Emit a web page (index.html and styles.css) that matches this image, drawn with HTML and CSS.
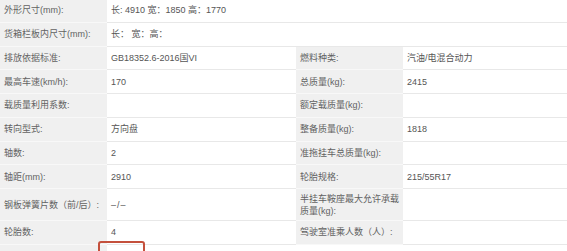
FILE: index.html
```html
<!DOCTYPE html>
<html lang="zh-CN">
<head>
<meta charset="utf-8">
<link rel="stylesheet" href="styles.css">
</head>
<body>
<div class="spec">
  <div class="lab">外形尺寸(mm):</div><div class="val span3">长: 4910 宽：1850 高：1770</div>
  <div class="lab">货箱栏板内尺寸(mm):</div><div class="val span3">长： 宽：高：</div>
  <div class="lab">排放依据标准:</div><div class="val">GB18352.6-2016国VI</div><div class="lab">燃料种类:</div><div class="val">汽油/电混合动力</div>
  <div class="lab">最高车速(km/h):</div><div class="val">170</div><div class="lab">总质量(kg):</div><div class="val">2415</div>
  <div class="lab">载质量利用系数:</div><div class="val"></div><div class="lab">额定载质量(kg):</div><div class="val"></div>
  <div class="lab">转向型式:</div><div class="val">方向盘</div><div class="lab">整备质量(kg):</div><div class="val">1818</div>
  <div class="lab">轴数:</div><div class="val">2</div><div class="lab">准拖挂车总质量(kg):</div><div class="val"></div>
  <div class="lab">轴距(mm):</div><div class="val">2910</div><div class="lab">轮胎规格:</div><div class="val">215/55R17</div>
  <div class="lab">钢板弹簧片数（前/后）:</div><div class="val dash">–/–</div><div class="lab">半挂车鞍座最大允许承载质量(kg):</div><div class="val"></div>
  <div class="lab">轮胎数:</div><div class="val">4</div><div class="lab">驾驶室准乘人数（人）:</div><div class="val"></div>
  <div class="lab"></div><div class="val span3 marked"><span class="highlight"></span></div>
</div>
</body>
</html>
```
FILE: styles.css
```css
html, body {
  margin: 0;
  padding: 0;
  background: #ffffff;
}
body {
  font-family: "Liberation Sans", "Noto Sans CJK SC", sans-serif;
  font-size: 9px;
  overflow: hidden;
}
.spec {
  display: grid;
  grid-template-columns: 107px 189px 107px 1fr;
  grid-template-rows: repeat(8, 23.75px) 32px 23.75px 23.75px;
  margin-top: -1px;
}
.lab, .val {
  display: flex;
  align-items: center;
  box-sizing: border-box;
  line-height: 12px;
  padding: 0 3px 0 4px;
}
.lab {
  background: #f0f0f0;
  color: #626262;
  border-bottom: 1px solid #f8f8f8;
}
.val {
  background: #ffffff;
  color: #555555;
  border-bottom: 1px solid #e8e8e8;
}
.dash {
  letter-spacing: 1px;
}
.span3 {
  grid-column: span 3;
}
.marked {
  position: relative;
}
.highlight {
  position: absolute;
  left: -9px;
  top: -4px;
  width: 47px;
  height: 30px;
  box-sizing: border-box;
  border: 2px solid #c4503c;
  border-radius: 3px;
}
```
